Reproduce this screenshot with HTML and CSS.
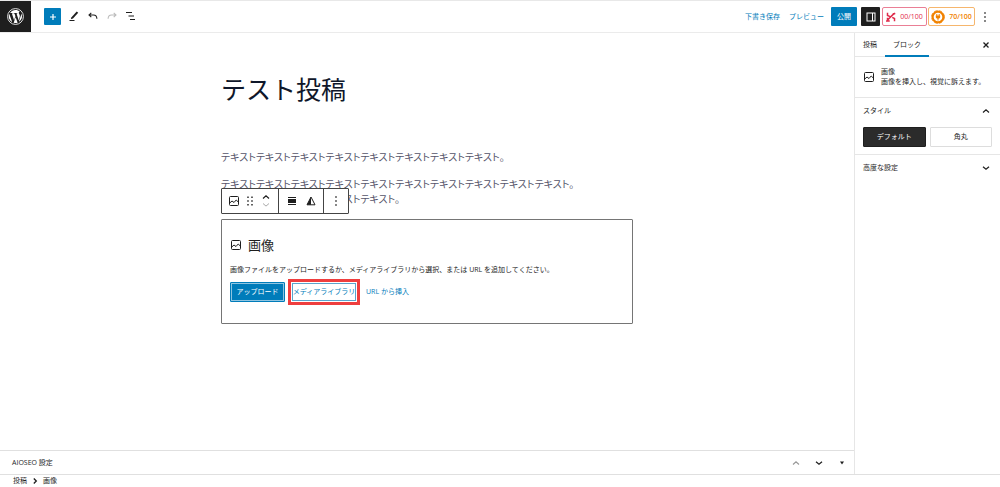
FILE: index.html
```html
<!DOCTYPE html>
<html lang="ja">
<head>
<meta charset="utf-8">
<meta name="viewport" content="width=device-width, initial-scale=1">
<title>テスト投稿</title>
<link rel="stylesheet" href="styles.css">
</head>
<body>
<svg class="sprite" aria-hidden="true">
  <symbol id="i-image" viewBox="0 0 12 12"><rect x="1.5" y="1.5" width="9" height="9" rx="1" fill="none" stroke="currentColor"/><path d="M1.5 8.2 4 6l2 1.5L8.2 5l2.3 2.2" fill="none" stroke="currentColor"/></symbol>
  <symbol id="i-dots" viewBox="0 0 12 12"><path d="M5.300 1.300h1.400v1.400H5.300zM5.300 5.300h1.400v1.400H5.300zM5.300 9.300h1.400v1.400H5.300z" fill="currentColor"/></symbol>
  <symbol id="i-up" viewBox="0 0 12 12"><path d="m3 7.5 3-2.6 3 2.6" fill="none" stroke="currentColor" stroke-width="1.2"/></symbol>
  <symbol id="i-down" viewBox="0 0 12 12"><path d="m3 4.7 3 2.6 3-2.6" fill="none" stroke="currentColor" stroke-width="1.2"/></symbol>
  <symbol id="i-undo" viewBox="0 0 12 12"><path d="M4.300 2.800 2 5l2.300 2.200M2 5h4.500c2 0 3.300 1.200 3.400 3.700" fill="none" stroke="currentColor" stroke-width="1.100"/></symbol>
</svg>

<div class="editor">
  <header class="header">
    <a class="logo" href="#" aria-label="投稿を表示">
      <svg viewBox="0 0 24 24"><circle cx="12" cy="12" r="11.2" fill="none" stroke="#fff" stroke-width="1.2"/><path fill="#fff" d="M3.1 8.2 7.3 19.8A9.2 9.2 0 0 1 3.1 8.2zM12 2.8c2.4 0 4.5.9 6.200 2.400-.9 0-1.600.7-1.600 1.600 0 1.600 1.500 2.500 1.500 4.500 0 .8-.3 1.700-.7 3l-.9 2.900-3.100-9.300 1.200-.1V7H9.400v.8l1.200.1 1.300 3.600-1.900 5.700L6.900 7.900 8 7.800V7H4.400C6 4.500 8.800 2.800 12 2.800zM12.200 13l2.800 7.700a9.200 9.200 0 0 1-5.600.1zM20.100 7.700a9.200 9.200 0 0 1-3.600 12.200l2.800-8.100c.5-1.500.8-2.800.8-4.100z"/></svg>
    </a>
    <div class="tools">
      <button class="tool tool-add" aria-label="ブロックを追加"><svg viewBox="0 0 12 12"><path d="M6 3v6M3 6h6" stroke="#fff" stroke-width="1.200"/></svg></button>
      <button class="tool" aria-label="編集"><svg viewBox="0 0 12 12"><path d="m3.500 7.200 5.200-5.700 1.500 1.300L5 8.500l-2.200.8z" fill="currentColor"/><path d="M1.500 10.500h5" stroke="currentColor"/></svg></button>
      <button class="tool" aria-label="元に戻す"><svg><use href="#i-undo"/></svg></button>
      <button class="tool redo" aria-label="やり直す" disabled><svg><use href="#i-undo"/></svg></button>
      <button class="tool" aria-label="概要"><svg viewBox="0 0 12 12"><path d="M1 2.500h6M3.500 6H9M5 9.500h5" stroke="currentColor" stroke-width="1.100"/></svg></button>
    </div>
    <div class="actions">
      <button class="link save">下書き保存</button>
      <button class="link preview">プレビュー</button>
      <button class="publish">公開</button>
      <button class="toggle" aria-label="設定"><svg viewBox="0 0 12 12"><rect x="2" y="2" width="8" height="8" fill="none" stroke="#fff"/><path d="M7.500 2v8" stroke="#fff"/></svg></button>
      <button class="score score-red"><svg viewBox="0 0 12 12"><path d="M1.800 1v3.200L5 5.600M11 1.200 8 3.500 4.500 7 1 10.800h3.500M10.200 11V7.800L7.500 6.500M1.800 7v3M8 2h3" fill="none" stroke="currentColor" stroke-width="1.800"/></svg>00/100</button>
      <button class="score score-orange"><svg viewBox="0 0 14 14"><circle cx="7" cy="7" r="5.300" fill="none" stroke="currentColor" stroke-width="2"/><circle cx="7" cy="7" r="6.300" fill="none" stroke="currentColor" stroke-dasharray="3.800 1.148"/><path d="M5.800 4v2M8.200 4v2M7 8v2.500" stroke="currentColor"/><path d="M4.800 5.600h4.400v1.500c0 1-.8 1.600-2.200 1.600s-2.200-.6-2.200-1.600z" fill="currentColor"/></svg>70/100</button>
      <button class="more" aria-label="オプション"><svg><use href="#i-dots"/></svg></button>
    </div>
  </header>

  <div class="body">
    <div class="main">
      <main class="canvas">
        <article class="post">
          <h1>テスト投稿</h1>
          <p>テキストテキストテキストテキストテキストテキストテキストテキスト。</p>
          <p>テキストテキストテキストテキストテキストテキストテキストテキストテキストテキスト。<br>テキストテキストテキストテキストテキスト。</p>
          <section class="block">
            <div class="toolbar" role="toolbar" aria-label="ブロックツール">
              <div class="group group-block">
                <button aria-label="画像"><svg><use href="#i-image"/></svg></button>
                <button class="drag" aria-label="ドラッグ"><svg viewBox="0 0 12 12"><path d="M4 1.500v9M8 1.500v9" stroke="currentColor" stroke-width="1.400" stroke-dasharray="1.400 2.400"/></svg></button>
                <div class="movers">
                  <button aria-label="上に移動"><svg viewBox="0 0 12 8"><path d="m3 5.500 3-2.600 3 2.600" fill="none" stroke="#1e1e1e" stroke-width="1.200"/></svg></button>
                  <button aria-label="下に移動" disabled><svg viewBox="0 0 12 8"><path d="m3 2.500 3 2.600 3-2.600" fill="none" stroke="#aaa"/></svg></button>
                </div>
              </div>
              <div class="group group-style">
                <button aria-label="配置"><svg viewBox="0 0 12 12"><path d="M2 2.500h8M2 9.500h8" stroke="currentColor"/><path d="M2 4h8v4H2z" fill="currentColor"/></svg></button>
                <button aria-label="デュオトーン"><svg viewBox="0 0 12 12"><path d="M6 2 2 9.800h8z" fill="none" stroke="currentColor"/><path d="M6 2 2 9.800h4z" fill="currentColor"/></svg></button>
              </div>
              <div class="group group-more"><button aria-label="オプション"><svg><use href="#i-dots"/></svg></button></div>
            </div>
            <h2><svg><use href="#i-image"/></svg>画像</h2>
            <p class="hint">画像ファイルをアップロードするか、メディアライブラリから選択、または URL を追加してください。</p>
            <div class="choices">
              <button class="upload">アップロード</button>
              <div class="highlight"><button class="library">メディアライブラリ</button></div>
              <button class="link">URL から挿入</button>
            </div>
          </section>
        </article>
      </main>
      <section class="metabox">
        <h2>AIOSEO 設定</h2>
        <div class="meta-actions">
          <button class="muted" aria-label="上へ"><svg><use href="#i-up"/></svg></button>
          <button aria-label="下へ"><svg><use href="#i-down"/></svg></button>
          <button aria-label="パネルを切り替え"><svg viewBox="0 0 12 12"><path d="M4 4.500h4L6 7.500z" fill="currentColor"/></svg></button>
        </div>
      </section>
    </div>

    <aside class="sidebar">
      <div class="tabs">
        <button>投稿</button>
        <button class="active">ブロック</button>
        <button class="close" aria-label="閉じる"><svg viewBox="0 0 12 12"><path d="m3.500 3.500 5 5M8.500 3.500l-5 5" stroke="currentColor" stroke-width="1.300"/></svg></button>
      </div>
      <div class="card">
        <svg><use href="#i-image"/></svg>
        <div><h2>画像</h2><p>画像を挿入し、視覚に訴えます。</p></div>
      </div>
      <section class="panel">
        <button class="panel-head">スタイル<svg><use href="#i-up"/></svg></button>
        <div class="styles">
          <button class="selected">デフォルト</button>
          <button>角丸</button>
        </div>
      </section>
      <section class="panel">
        <button class="panel-head">高度な設定<svg><use href="#i-down"/></svg></button>
      </section>
    </aside>
  </div>

  <nav class="crumbs" aria-label="パンくず">
    <a href="#">投稿</a>
    <svg viewBox="0 0 12 12"><path d="m4.800 3.500 2.500 2.500-2.500 2.500" fill="none" stroke="currentColor" stroke-width="1.300"/></svg>
    <span>画像</span>
  </nav>
</div>
</body>
</html>
```
FILE: styles.css
```css
* { box-sizing: border-box; }

body {
  margin: 0;
  background: #fff;
  color: #1e1e1e;
  font: 7px/10px "Open Sans", "Noto Sans CJK JP", sans-serif;
}

h1, h2, p { margin: 0; font-weight: 400; }
h2 { font-size: 7px; }

button {
  display: flex;
  align-items: center;
  justify-content: center;
  padding: 0;
  border: 0;
  background: none;
  color: inherit;
  font: inherit;
  white-space: nowrap;
}

svg { display: block; flex: none; width: 12px; height: 12px; }
.sprite { position: absolute; width: 0; height: 0; }

.editor {
  display: flex;
  flex-direction: column;
  min-height: 100vh;
  border-top: 1px solid #e8e8e8;
}

/* Header */
.header {
  display: flex;
  align-items: center;
  height: 32px;
  border-bottom: 1px solid #ebebeb;
}
.logo {
  display: grid;
  place-items: center;
  align-self: stretch;
  width: 31px;
  background: #1e1e1e;
}
.logo svg { width: 17px; height: 17px; }
.tools { display: flex; gap: 3px; margin-left: 13px; }
.tool { width: 16px; height: 16px; }
.tool-add { width: 17px; height: 17px; margin-right: 2px; border-radius: 1px; background: #007cba; }
.redo { color: #bbb; }
.redo svg { transform: scaleX(-1); }

.actions { display: flex; align-items: center; margin-left: auto; padding-right: 9px; }
.link { color: #007cba; }
.preview { margin: 0 7px 0 9px; }
.publish { width: 26px; height: 19px; border-radius: 1px; background: #007cba; color: #fff; }
.toggle { width: 19px; height: 19px; margin: 0 2px 0 4px; border-radius: 1px; background: #1e1e1e; }
.score {
  gap: 4px;
  height: 19px;
  width: 45px;
  border: 1px solid;
  border-radius: 2px;
  font-weight: 600;
}
.score-red { border-color: #ea7f95; color: #df2a4a; font-weight: 500; }
.score-red svg { width: 10px; height: 10px; }
.score-orange { width: 47px; margin-left: 1px; border-color: #f6b66d; color: #f18200; }
.score-orange svg { width: 14px; height: 14px; }
.more { width: 12px; margin-left: 4px; }

/* Layout */
.body { display: flex; flex: 1; }
.main { display: flex; flex: 1; flex-direction: column; }
.canvas { flex: 1; padding: 40px 16px 16px; }

/* Post */
.post { max-width: 412px; margin: 0 auto; color: #55546a; }
.post h1 { margin-bottom: 45px; color: #0f172a; font-size: 25px; line-height: 32px; }
.post p {
  margin-bottom: 12px;
  font-size: 10px;
  font-feature-settings: "palt";
  line-height: 15px;
}

.block {
  position: relative;
  padding: 16px 8px 18px;
  border: 1px solid #757575;
  border-radius: 1px;
  color: #1e1e1e;
}
.block h2 { display: flex; align-items: center; gap: 6px; font-size: 13px; line-height: 18px; }
.post .hint {
  margin: 9px 0 2px;
  font-size: 7px;
  font-feature-settings: normal;
  line-height: 14px;
}
.choices { display: flex; align-items: center; }
.upload {
  width: 55px;
  height: 20px;
  border: 1px solid #007cba;
  border-radius: 1px;
  box-shadow: inset 0 0 0 1px #8fc4e0;
  background: #007cba;
  color: #fff;
}
.highlight { margin: 0 6px 0 3px; padding: 1px; border: 3px solid #ef3e3e; }
.library { width: 64px; height: 18px; border: 1px solid #5ba5cc; color: #007cba; }

.toolbar {
  position: absolute;
  bottom: 100%;
  left: -1px;
  display: flex;
  height: 26px;
  margin-bottom: 6px;
  border: 1px solid #444;
  border-radius: 1px;
  background: #fff;
}
.group { display: flex; align-items: center; justify-content: center; }
.group + .group { border-left: 1px solid #444; }
.group-block { gap: 4px; width: 56px; }
.group-style { gap: 7px; width: 45px; }
.group-more { width: 25px; }
.movers { display: flex; flex-direction: column; }
.movers svg { height: 8px; }

/* Meta boxes */
.metabox {
  display: flex;
  align-items: center;
  justify-content: space-between;
  height: 24px;
  padding: 0 6px 0 12px;
  border-top: 1px solid #e0e0e0;
}
.meta-actions { display: flex; gap: 11px; }
.muted { color: #999; }

/* Sidebar */
.sidebar { width: 146px; border-left: 1px solid #e6e6e6; }
.tabs { display: flex; height: 24px; border-bottom: 1px solid #e6e6e6; }
.tabs button { height: 24px; padding: 0 8px; }
.tabs .active { border-bottom: 2px solid #007cba; padding-top: 2px; }
.tabs .close { margin-left: auto; }
.card { display: flex; align-items: center; gap: 6px; height: 40px; padding: 0 8px; }
.panel { padding: 0 8px; border-top: 1px solid #e6e6e6; }
.panel-head { justify-content: space-between; width: 100%; height: 26px; }
.styles { display: grid; grid-template-columns: 1fr 1fr; gap: 4px; padding: 3px 0 7px; }
.styles button { height: 20px; border: 1px solid #ddd; border-radius: 1px; }
.styles .selected { border-color: #1e1e1e; background: #2b2b2b; color: #fff; }

/* Breadcrumbs */
.crumbs {
  display: flex;
  align-items: center;
  gap: 2px;
  height: 13px;
  padding: 0 13px;
  border-top: 1px solid #e0e0e0;
}
.crumbs a { color: inherit; text-decoration: none; }
```
